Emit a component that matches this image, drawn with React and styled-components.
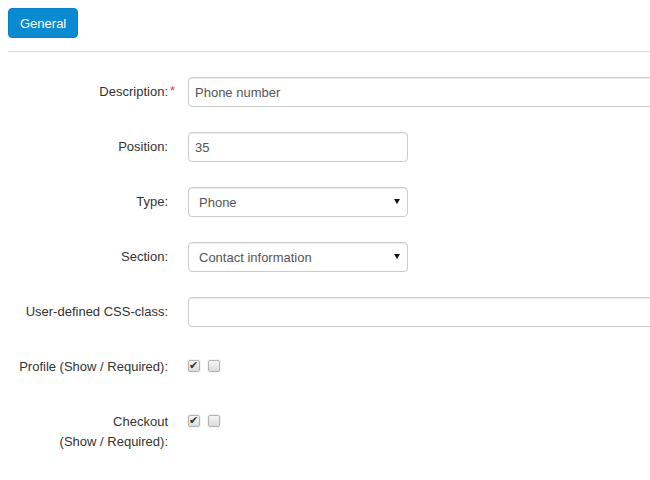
import React from 'react';
import styled, { createGlobalStyle } from 'styled-components';

const GlobalStyle = createGlobalStyle`
  html, body {
    margin: 0;
    padding: 0;
    background: #fff;
    overflow: hidden;
  }
  body {
    font-family: "Liberation Sans", Arial, sans-serif;
    font-size: 13px;
    color: #333;
  }
`;

const Page = styled.div`
  width: 760px;
  padding: 8px;
`;

const Toolbar = styled.div`
  display: flex;
  padding-bottom: 13px;
  border-bottom: 1px solid #dcdcdc;
`;

const TabButton = styled.button`
  height: 30px;
  padding: 0 11px;
  border: 1px solid #0583c8;
  border-radius: 4px;
  background: #0a8ad0;
  color: #fff;
  font-family: inherit;
  font-size: 13px;
  cursor: pointer;
`;

const Form = styled.form`
  margin-top: 25px;
`;

const Row = styled.div`
  display: grid;
  grid-template-columns: 160px 1fr;
  column-gap: 20px;
  align-items: start;
  min-height: 30px;
  margin-bottom: 25px;
`;

const Label = styled.label`
  position: relative;
  padding-top: 5px;
  line-height: 20px;
  text-align: right;
  color: #333;
`;

const Star = styled.span`
  position: absolute;
  left: calc(100% + 2px);
  top: 4px;
  color: #e4393c;
`;

const TextInput = styled.input`
  box-sizing: border-box;
  height: 30px;
  width: ${p => (p.$short ? '220px' : '100%')};
  padding: 0 6px;
  border: 1px solid #ccc;
  border-radius: 4px;
  box-shadow: inset 0 1px 1px rgba(0, 0, 0, 0.075);
  font-family: inherit;
  font-size: 13px;
  color: #555;
  outline: none;
`;

const SelectWrap = styled.div`
  position: relative;
  width: 220px;
`;

const Select = styled.select`
  appearance: none;
  box-sizing: border-box;
  width: 100%;
  height: 30px;
  padding: 0 20px 0 10px;
  border: 1px solid #ccc;
  border-radius: 4px;
  background: #fff;
  box-shadow: inset 0 1px 1px rgba(0, 0, 0, 0.075);
  font-family: inherit;
  font-size: 13px;
  color: #555;
  outline: none;
`;

const Caret = styled.span`
  position: absolute;
  right: 8px;
  top: 12px;
  width: 0;
  height: 0;
  border-left: 3px solid transparent;
  border-right: 3px solid transparent;
  border-top: 5px solid #111;
  pointer-events: none;
`;

const Checks = styled.div`
  display: flex;
  align-items: center;
  gap: 8px;
  height: 20px;
  padding-top: 4px;
`;

const Check = styled.input.attrs({ type: 'checkbox' })`
  appearance: none;
  position: relative;
  box-sizing: border-box;
  width: 12px;
  height: 12px;
  margin: 0;
  border: 1px solid #b3b3b3;
  border-radius: 2px;
  background: linear-gradient(#f6f6f6, #dcdcdc);
  box-shadow: 0 0 0 1px #f4f4f4;

  &:checked::after {
    content: '\\2714';
    position: absolute;
    left: 0;
    top: -2px;
    font-family: "DejaVu Sans", sans-serif;
    font-size: 11px;
    line-height: 14px;
    color: #333;
  }
`;

const Select1 = ({ value, options }) => (
  <SelectWrap>
    <Select defaultValue={value}>
      {options.map(o => <option key={o}>{o}</option>)}
    </Select>
    <Caret />
  </SelectWrap>
);

export default function App() {
  return (
    <Page>
      <GlobalStyle />
      <Toolbar>
        <TabButton type="button">General</TabButton>
      </Toolbar>
      <Form>
        <Row>
          <Label>Description:<Star>*</Star></Label>
          <TextInput defaultValue="Phone number" />
        </Row>
        <Row>
          <Label>Position:</Label>
          <TextInput $short defaultValue="35" />
        </Row>
        <Row>
          <Label>Type:</Label>
          <Select1 value="Phone" options={['Text', 'Phone', 'Email']} />
        </Row>
        <Row>
          <Label>Section:</Label>
          <Select1 value="Contact information" options={['Contact information', 'Billing address', 'Shipping address']} />
        </Row>
        <Row>
          <Label>User-defined CSS-class:</Label>
          <TextInput />
        </Row>
        <Row>
          <Label>Profile (Show / Required):</Label>
          <Checks>
            <Check defaultChecked />
            <Check />
          </Checks>
        </Row>
        <Row>
          <Label>Checkout<br />(Show / Required):</Label>
          <Checks>
            <Check defaultChecked />
            <Check />
          </Checks>
        </Row>
      </Form>
    </Page>
  );
}
